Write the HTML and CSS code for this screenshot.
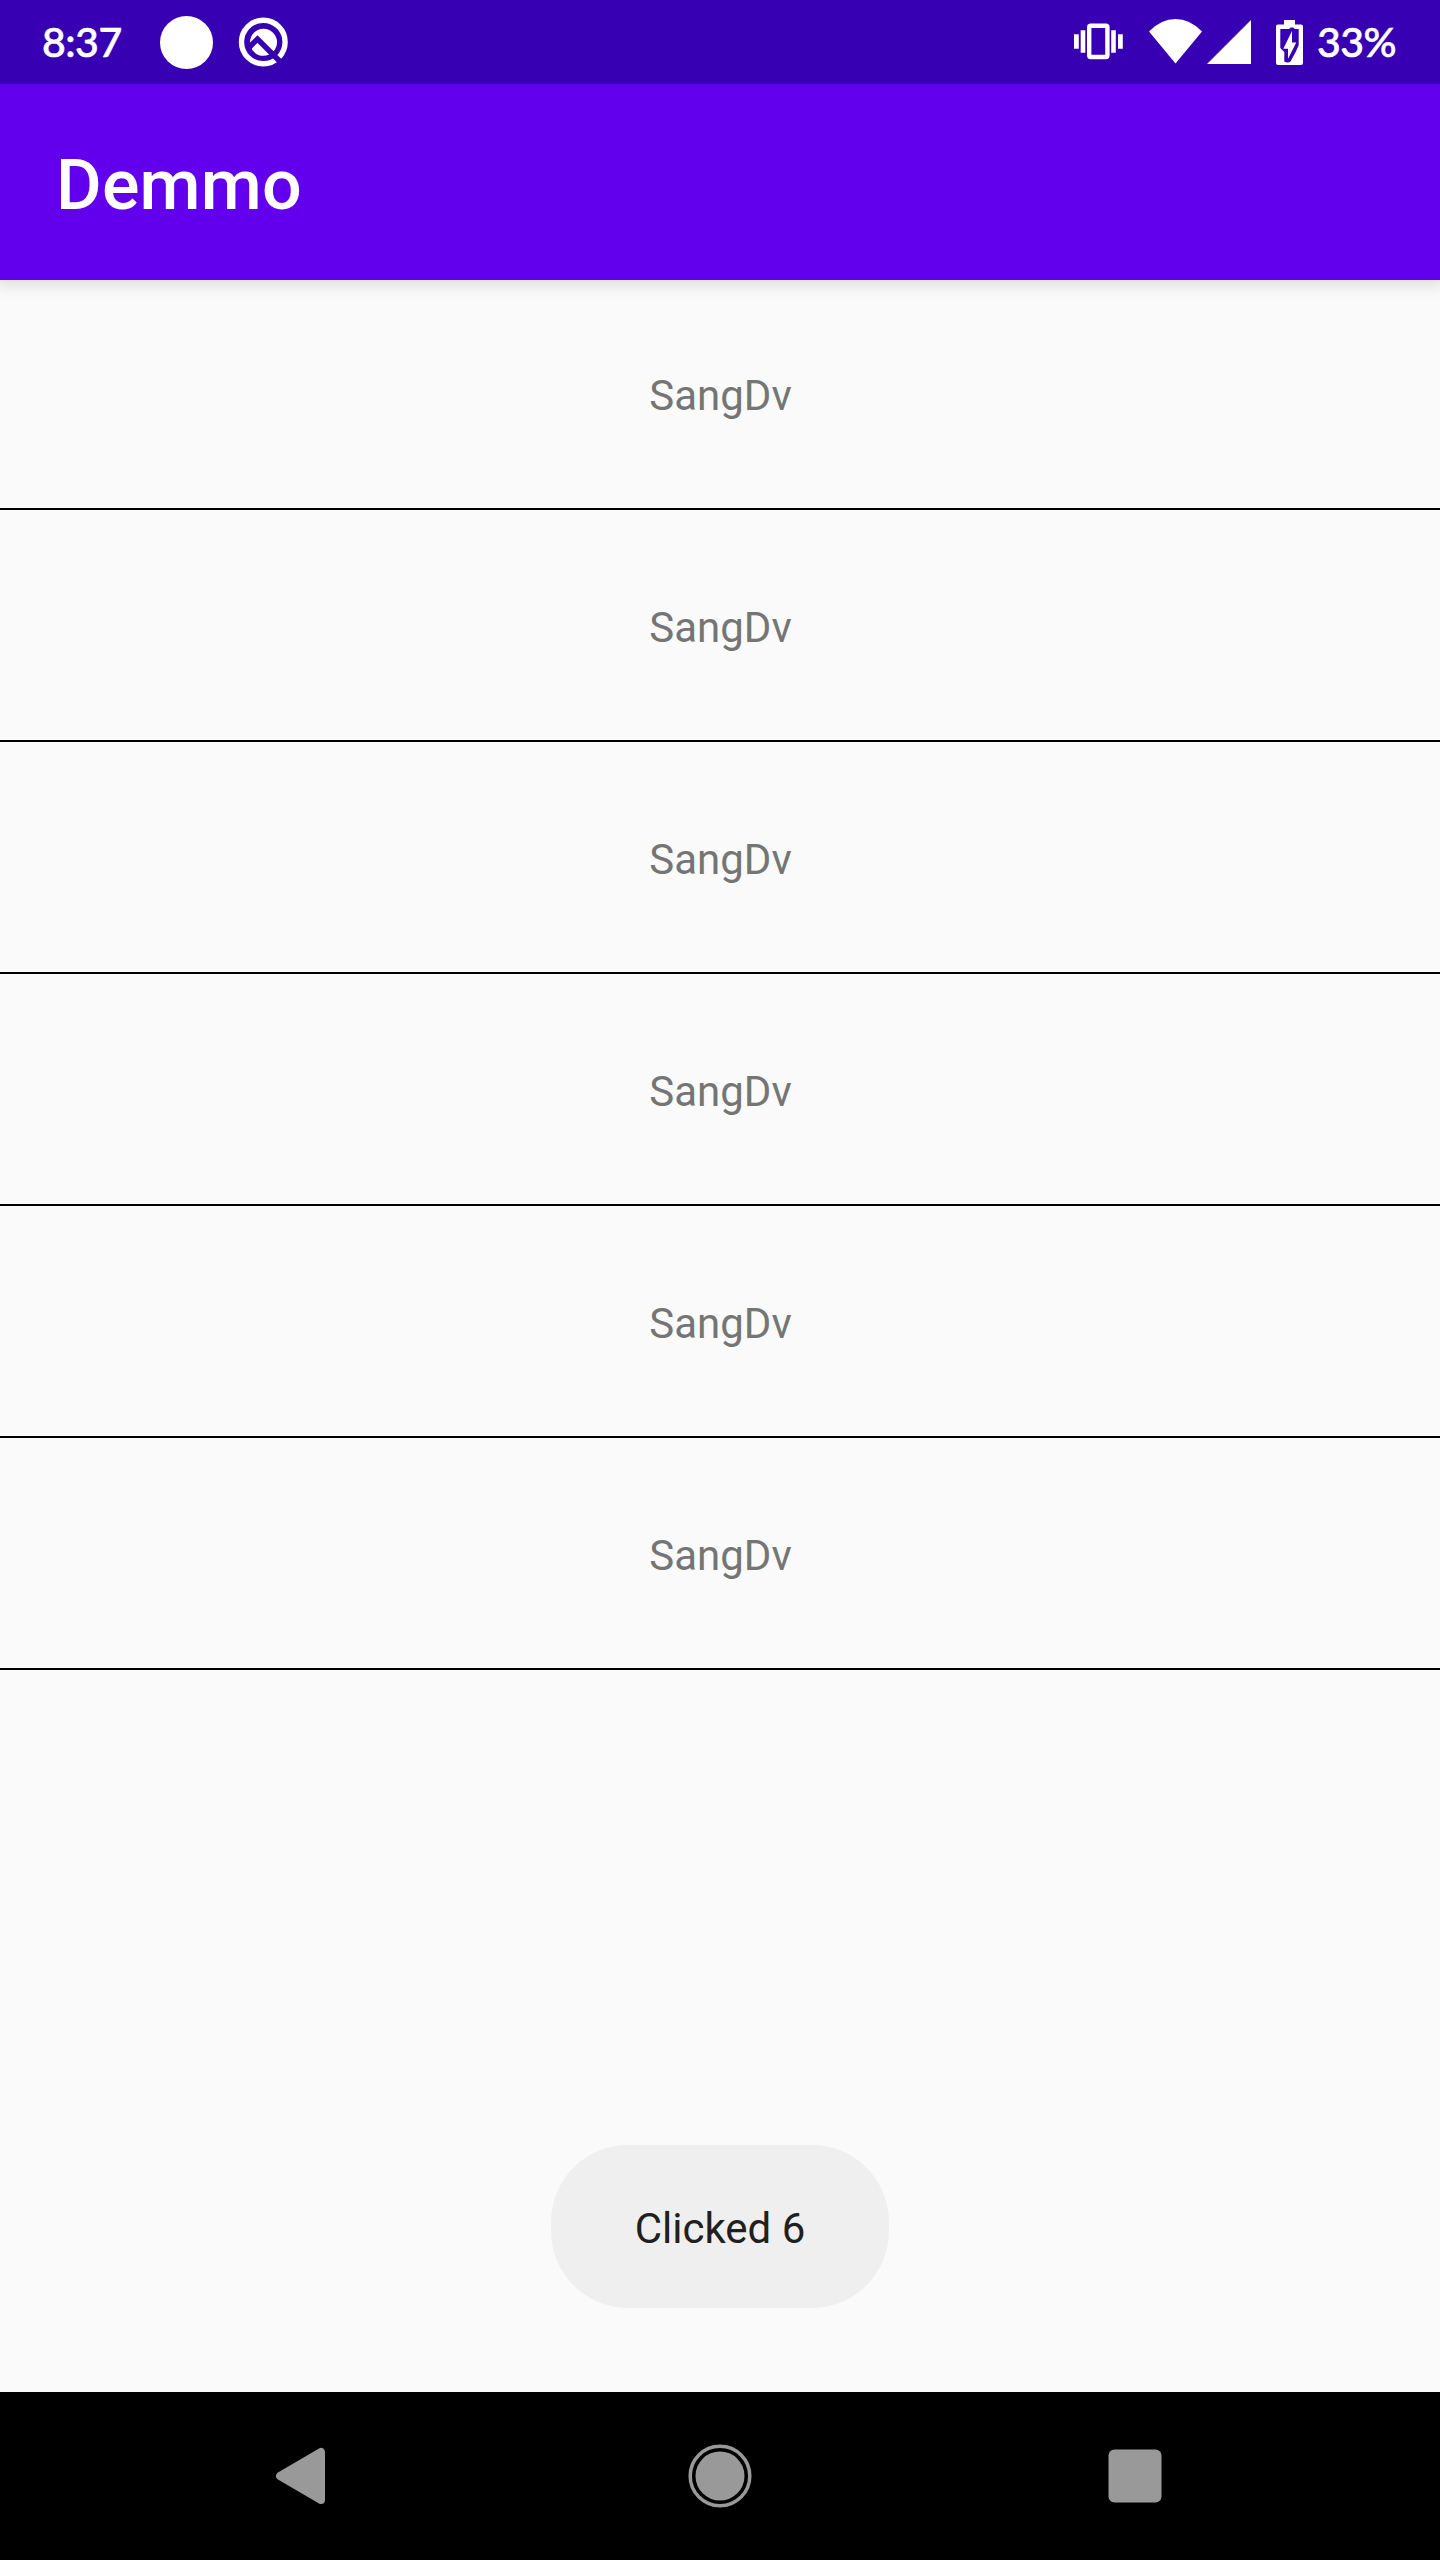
FILE: index.html
```html
<!DOCTYPE html>
<html lang="en">
<head>
<meta charset="utf-8">
<title>Demmo</title>
<link rel="stylesheet" href="styles.css">
</head>
<body>
<div class="screen">
  <header class="status-bar">
    <span class="clock">8:37</span>
    <span class="notification-dot"></span>
    <svg class="q-icon" viewBox="0 0 52 52">
      <circle cx="26.300" cy="26" r="21.800" fill="none" stroke="#fff" stroke-width="5.400"/>
      <circle cx="26.500" cy="26.300" r="13.500" fill="#fff"/>
      <path d="M12 31.500L20.500 23L47 49.500" fill="none" stroke="#3700b3" stroke-width="5.400"/>
    </svg>
    <div class="system-icons">
      <svg class="vibrate-icon" viewBox="0 0 50 38" fill="#fff">
        <rect x="15.200" y="2.700" width="18.200" height="31.300" rx="1.500" fill="none" stroke="#fff" stroke-width="4.400"/>
        <path d="M0 11.300h4.800v14.400H0zM6.700 7.300h4.600v22.400H6.700zM37.200 7.300h4.600v22.400h-4.600zM44 11.300h4.800v14.400H44z"/>
      </svg>
      <svg class="wifi-icon" viewBox="0 0 54 45" fill="#fff"><path d="M0 12.500Q12 0 26.500 0T53 12.500L26.500 44.500z"/></svg>
      <svg class="signal-icon" viewBox="0 0 44 44" fill="#fff"><path d="M44 0v44H0z"/></svg>
      <svg class="battery-icon" viewBox="0 0 27 45">
        <path d="M8 0h11v4.500h6q2 0 2 2V43q0 2-2 2H2q-2 0-2-2V6.500q0-2 2-2h6z" fill="#fff"/>
        <path d="M4.300 9H13L14.700 7.500H17.300L18.700 9H22.700V25L19.700 32L14.500 41.500Q12 43.500 8.300 41.500V32L4.300 28z" fill="#3700b3"/>
        <path d="M16 11v11.500h4.300L12 38.700V28.700H7.300z" fill="#fff"/>
      </svg>
      <span class="battery-level">33%</span>
    </div>
  </header>
  <div class="app-bar"><h1 class="title">Demmo</h1></div>
  <main class="content">
    <ul class="list">
      <li class="row">SangDv</li>
      <li class="row">SangDv</li>
      <li class="row">SangDv</li>
      <li class="row">SangDv</li>
      <li class="row">SangDv</li>
      <li class="row">SangDv</li>
    </ul>
    <div class="toast">Clicked 6</div>
  </main>
  <nav class="nav-bar">
    <svg class="nav-icon" viewBox="0 0 80 80"><path d="M15 40L56 16V64z" fill="#999" stroke="#999" stroke-width="8" stroke-linejoin="round"/></svg>
    <svg class="nav-icon" viewBox="0 0 80 80"><circle cx="40" cy="40" r="24.500" fill="#999"/><circle cx="40" cy="40" r="29.800" fill="none" stroke="#999" stroke-width="3.500"/></svg>
    <svg class="nav-icon" viewBox="0 0 80 80"><rect x="13.500" y="13.500" width="53" height="53" rx="6" fill="#999"/></svg>
  </nav>
</div>
</body>
</html>
```
FILE: styles.css
```css
* { box-sizing: border-box; }
body { margin: 0; font-family: Roboto, "Liberation Sans", sans-serif; }
.screen { display: flex; flex-direction: column; width: 1440px; height: 2560px; overflow: hidden; background: #fafafa; }
.status-bar { display: flex; align-items: center; height: 84px; padding: 0 42px; background: #3700b3; color: #fff; font: 500 41px/84px Lato, sans-serif; letter-spacing: -0.5px; -webkit-text-stroke: 0.6px #fff; }
.clock { width: 118px; }
.notification-dot { width: 53px; height: 53px; border-radius: 50%; background: #fff; }
.q-icon { width: 52px; height: 52px; margin-left: 24px; }
.system-icons { display: flex; align-items: center; margin-left: auto; }
.vibrate-icon { width: 50px; height: 38px; }
.wifi-icon { width: 54px; height: 45px; margin: -2px 0 0 25px; }
.signal-icon { width: 44px; height: 44px; margin-left: 4px; }
.battery-icon { width: 27px; height: 45px; margin: 0 14px 0 25px; }
.battery-level { width: 81px; white-space: nowrap; }
.app-bar { display: flex; align-items: center; height: 196px; padding: 6px 56px 0; background: #6200ee; box-shadow: 0 0 14px 5px rgba(0, 0, 0, .12); z-index: 1; }
.status-bar { position: relative; z-index: 2; }
.title { margin: 0; color: #fff; font-size: 70px; font-weight: 500; letter-spacing: 0.2px; }
.content { flex: 1; display: flex; flex-direction: column; align-items: center; justify-content: space-between; padding-bottom: 84px; }
.list { width: 100%; margin: -2px 0 0; padding: 0; list-style: none; }
.row { display: flex; align-items: center; justify-content: center; height: 232px; padding: 4px 0 0 1px; border-bottom: 2px solid #000; color: #757575; font-size: 42px; }
.toast { width: 338px; height: 163px; padding-top: 2px; border-radius: 77px; background: #efefef; color: #202020; font-size: 42px; line-height: 163px; text-align: center; }
.nav-bar { display: flex; align-items: center; justify-content: space-between; height: 168px; padding: 0 265px; background: #000; }
.nav-icon { width: 80px; height: 80px; }
```
